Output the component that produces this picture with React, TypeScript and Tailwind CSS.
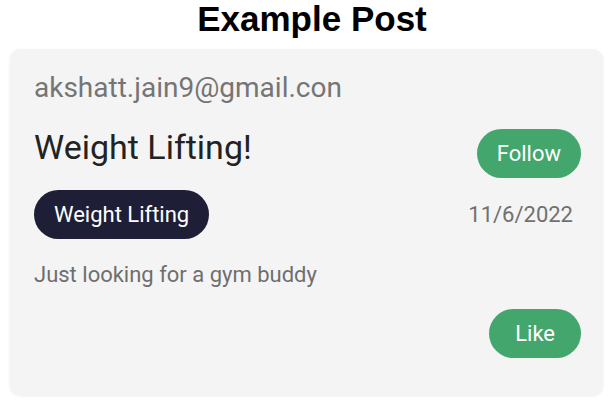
export default function App() {
  return (
    <div className="w-[612px] h-[401px] bg-white overflow-hidden">
      <h1 className="text-center text-[35px] leading-[38px] font-bold text-black font-['Liberation_Sans',Arial,sans-serif] pl-[12px]">
        Example Post
      </h1>
      <div className="mx-[10px] mt-[11px] w-[593px] h-[346px] rounded-[10px] bg-[#f4f4f4] shadow-[0_1px_3px_rgba(0,0,0,0.08)] pl-[24px] pr-[22px] pt-[22px] font-['Roboto',sans-serif]">
        <div className="text-[28px] leading-[34px] text-[#757575]">akshatt.jain9@gmail.con</div>
        <div className="flex items-start justify-between mt-[22px]">
          <div className="text-[34px] leading-[41px] text-[#222222]">Weight Lifting!</div>
          <button className="mt-[2px] h-[49px] px-[20px] rounded-full bg-[#43a66d] text-white text-[22px]">Follow</button>
        </div>
        <div className="flex items-center justify-between mt-[12px]">
          <span className="h-[49px] px-[20px] rounded-full bg-[#1e1f37] text-white text-[22px] flex items-center">Weight Lifting</span>
          <span className="text-[22px] text-[#707070] pr-[8px]">11/6/2022</span>
        </div>
        <p className="mt-[23px] text-[22px] leading-[26px] text-[#6e6e6e]">Just looking for a gym buddy</p>
        <div className="flex justify-end mt-[21px]">
          <button className="h-[49px] px-[26px] rounded-full bg-[#43a66d] text-white text-[22px]">Like</button>
        </div>
      </div>
    </div>
  );
}
